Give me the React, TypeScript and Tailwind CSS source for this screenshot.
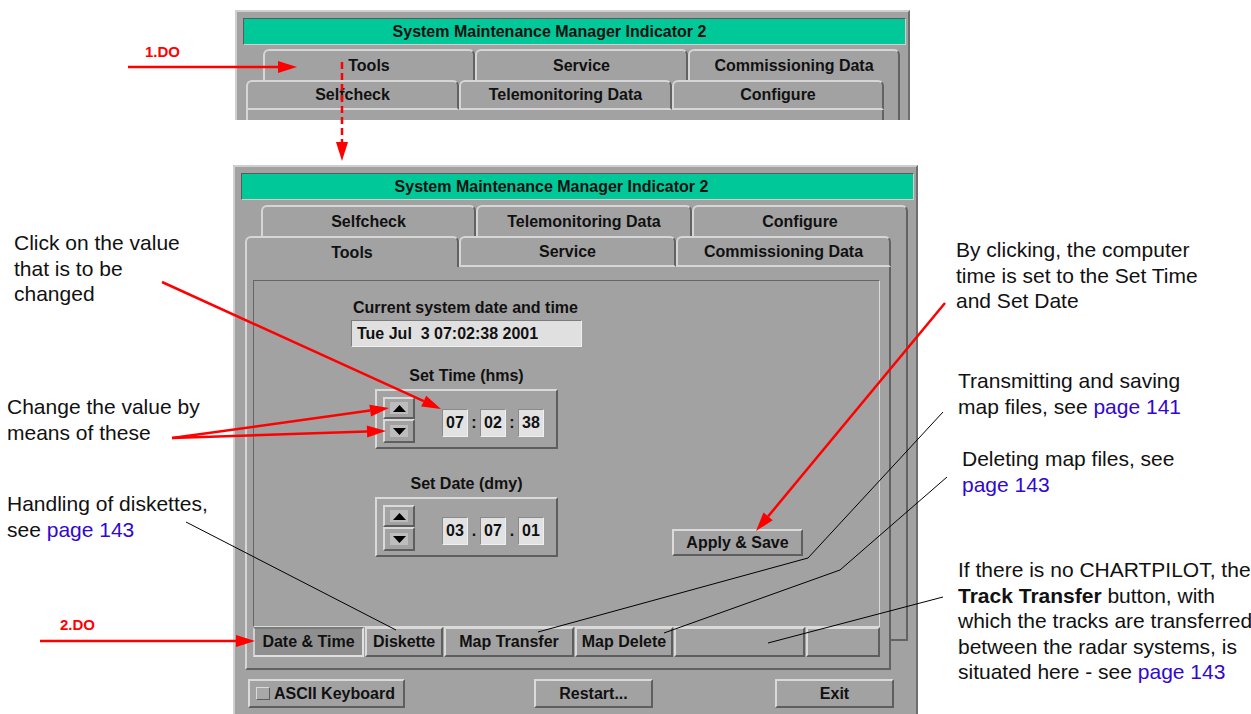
import React from 'react'

const LIGHT = 'border-t-[#dadada] border-l-[#dadada]'
const DARK = 'border-b-[#5e5e5e] border-r-[#5e5e5e]'
const raised = `border-2 ${LIGHT} ${DARK}`

function Tab({ label, className }: { label: string; className: string }) {
  return (
    <div
      className={`flex h-full items-center justify-center rounded-t-[6px] border-t-2 border-l-2 border-r-2 border-t-[#d6d6d6] border-l-[#d6d6d6] border-r-[#626262] text-[16px] font-bold ${className}`}
    >
      {label}
    </div>
  )
}

function Spin({ up }: { up?: boolean }) {
  return (
    <div
      className={`flex w-[32px] items-center justify-center ${raised} ${up ? 'h-[22px]' : 'h-[24px]'}`}
    >
      <div className="flex h-[12px] w-[18px] items-center justify-center bg-[#bdbdbd]">
        <svg width="13" height="7" viewBox="0 0 13 7">
          <polygon points={up ? '6.5,0 13,7 0,7' : '0,0 13,0 6.5,7'} fill="#000" />
        </svg>
      </div>
    </div>
  )
}

function Field({ value }: { value: string }) {
  return (
    <div className="flex h-[28px] w-[26px] items-center justify-center border border-t-[#8a8a8a] border-l-[#8a8a8a] border-r-[#efefef] border-b-[#efefef] bg-[#e2e2e2] text-[16px] font-bold">
      {value}
    </div>
  )
}

function Setter({ title, values, sep }: { title: string; values: string[]; sep: string }) {
  return (
    <div className="ml-[121px] w-[183px]">
      <div className="h-[20px] text-center text-[16px] leading-[20px] font-bold">{title}</div>
      <div className={`mt-[3px] flex h-[60px] ${raised}`}>
        <div className="ml-[6px] mt-[6px] flex flex-col">
          <Spin up />
          <Spin />
        </div>
        <div className="ml-[27px] mt-[18px] flex">
          <Field value={values[0]} />
          <div className="w-[12px] text-center text-[16px] leading-[28px] font-bold">{sep}</div>
          <Field value={values[1]} />
          <div className="w-[12px] text-center text-[16px] leading-[28px] font-bold">{sep}</div>
          <Field value={values[2]} />
        </div>
      </div>
    </div>
  )
}

function Button({ children, className }: { children: React.ReactNode; className: string }) {
  return (
    <div className={`flex items-center justify-center text-[16px] font-bold ${raised} ${className}`}>
      {children}
    </div>
  )
}

function Arrow({ x1, y1, x2, y2, dashed }: { x1: number; y1: number; x2: number; y2: number; dashed?: boolean }) {
  const a = Math.atan2(y2 - y1, x2 - x1)
  const L = 19
  const W = 6
  const bx = x2 - L * Math.cos(a)
  const by = y2 - L * Math.sin(a)
  const p1 = `${bx + W * Math.sin(a)},${by - W * Math.cos(a)}`
  const p2 = `${bx - W * Math.sin(a)},${by + W * Math.cos(a)}`
  return (
    <g>
      <line
        x1={x1}
        y1={y1}
        x2={bx}
        y2={by}
        stroke="#ff0000"
        strokeWidth={2.5}
        strokeDasharray={dashed ? '7 4' : undefined}
      />
      <polygon points={`${x2},${y2} ${p1} ${p2}`} fill="#ff0000" />
    </g>
  )
}

const link = 'text-[#3008d0]'

export default function App() {
  return (
    <div className="relative h-[714px] w-[1251px] overflow-hidden bg-white font-['Liberation_Sans',Arial,sans-serif] text-[#111]">
      {/* small window: step 1 */}
      <div className="absolute left-[235px] top-[10px] h-[110px] w-[675px] overflow-hidden border-2 border-b-0 border-t-[#cfcfcf] border-l-[#cfcfcf] border-r-[#6e6e6e] bg-[#a2a2a2] pl-[6px] pt-[6px]">
        <div className="flex h-[27px] w-[663px] items-center justify-center border border-[#5a5a5a] border-b-[#cfcfcf] border-r-[#cfcfcf] bg-[#00c898] pr-[50px] text-[16px] font-bold">
          System Maintenance Manager Indicator 2
        </div>
        <div className="ml-[20px] mt-[4px] flex h-[31px]">
          <Tab label="Tools" className="w-[212px]" />
          <Tab label="Service" className="w-[213px]" />
          <Tab label="Commissioning Data" className="w-[212px]" />
        </div>
        <div className="ml-[3px] flex">
          <div className="w-[638px]">
            <div className="flex h-[30px]">
              <Tab label="Selfcheck" className="w-[213px] border-b-2 border-b-[#d6d6d6]" />
              <Tab label="Telemonitoring Data" className="w-[213px] border-b-2 border-b-[#d6d6d6]" />
              <Tab label="Configure" className="w-[212px] border-b-2 border-b-[#d6d6d6]" />
            </div>
            <div className="h-[20px] border-l-2 border-r-2 border-l-[#d6d6d6] border-r-[#626262]" />
          </div>
          <div className="h-[50px] w-[16px] border-r-2 border-r-[#626262]" />
        </div>
      </div>

      {/* main window: step 2 */}
      <div className="absolute left-[233px] top-[165px] h-[560px] w-[685px] border-2 border-t-[#cfcfcf] border-l-[#cfcfcf] border-r-[#6e6e6e] border-b-[#6e6e6e] bg-[#a2a2a2] pl-[6px] pt-[6px]">
        <div className="flex h-[27px] w-[673px] items-center justify-center border border-[#5a5a5a] border-b-[#cfcfcf] border-r-[#cfcfcf] bg-[#00c898] pr-[52px] text-[16px] font-bold">
          System Maintenance Manager Indicator 2
        </div>
        <div className="ml-[20px] mt-[5px] flex h-[31px]">
          <Tab label="Selfcheck" className="w-[215px]" />
          <Tab label="Telemonitoring Data" className="w-[216px]" />
          <Tab label="Configure" className="w-[216px]" />
        </div>
        <div className="ml-[4px] flex">
          <div className="w-[646px]">
            <div className="flex h-[31px]">
              <Tab label="Tools" className="w-[214px]" />
              <Tab label="Service" className="w-[217px] border-b-2 border-b-[#d6d6d6]" />
              <Tab label="Commissioning Data" className="w-[215px] border-b-2 border-b-[#d6d6d6]" />
            </div>
            <div className="h-[403px] border-l-2 border-r-2 border-b-2 border-l-[#d6d6d6] border-r-[#626262] border-b-[#626262] pl-[6px] pt-[13px]">
              <div className="h-[347px] w-[627px] border border-t-[#666] border-l-[#666] border-r-[#dadada] border-b-[#dadada]">
                <div className="ml-[99px] mt-[17px] h-[20px] text-[16px] leading-[20px] font-bold">
                  Current system date and time
                </div>
                <div className="ml-[97px] mt-[2px] flex h-[27px] w-[231px] items-center whitespace-pre border border-t-[#7c7c7c] border-l-[#7c7c7c] border-r-[#efefef] border-b-[#efefef] bg-[#e0e0e0] pl-[5px] text-[16px] font-bold">
                  {'Tue Jul  3 07:02:38 2001'}
                </div>
                <div className="mt-[19px]">
                  <Setter title="Set Time (hms)" values={['07', '02', '38']} sep=":" />
                </div>
                <div className="mt-[25px] flex items-end">
                  <Setter title="Set Date (dmy)" values={['03', '07', '01']} sep="." />
                  <Button className="mb-[1px] ml-[114px] h-[27px] w-[131px]">Apply &amp; Save</Button>
                </div>
              </div>
              <div className="flex h-[30px] w-[627px] gap-[1px]">
                <div className="flex w-[111px] items-center justify-center border-2 border-t-[#7a7a7a] border-l-[#cfcfcf] border-r-[#e0e0e0] border-b-[#e0e0e0] bg-[#8f8f8f] text-[16px] font-bold">
                  Date &amp; Time
                </div>
                <Button className="w-[78px]">Diskette</Button>
                <Button className="w-[130px]">Map Transfer</Button>
                <Button className="w-[98px]">Map Delete</Button>
                <Button className="w-[131px]">{''}</Button>
                <Button className="w-[74px]">{''}</Button>
              </div>
            </div>
          </div>
          <div className="h-[405px] w-[17px] border-r-2 border-b-2 border-r-[#626262] border-b-[#626262]" />
        </div>
        <div className="mt-[9px] flex">
          <Button className="ml-[7px] h-[29px] w-[157px] !justify-start">
            <div className={`ml-[6px] h-[13px] w-[14px] border ${LIGHT} ${DARK} bg-[#a8a8a8]`} />
            <span className="ml-[4px]">ASCII Keyboard</span>
          </Button>
          <Button className="ml-[129px] h-[29px] w-[119px]">Restart...</Button>
          <Button className="ml-[122px] h-[29px] w-[119px]">Exit</Button>
        </div>
      </div>

      {/* step labels */}
      <div className="absolute left-[145px] top-[44px] text-[15px] leading-[16px] font-bold text-[#ff0000]">1.DO</div>
      <div className="absolute left-[60px] top-[617px] text-[15px] leading-[16px] font-bold text-[#ff0000]">2.DO</div>

      {/* callouts */}
      <div className="absolute left-[14px] top-[230px] whitespace-nowrap text-[21px] leading-[25.5px]">
        Click on the value
        <br />
        that is to be
        <br />
        changed
      </div>
      <div className="absolute left-[7px] top-[394px] whitespace-nowrap text-[21px] leading-[25.5px]">
        Change the value by
        <br />
        means of these
      </div>
      <div className="absolute left-[7px] top-[491px] whitespace-nowrap text-[21px] leading-[25.5px]">
        Handling of diskettes,
        <br />
        see <span className={link}>page 143</span>
      </div>
      <div className="absolute left-[956px] top-[237px] whitespace-nowrap text-[21px] leading-[25.5px]">
        By clicking, the computer
        <br />
        time is set to the Set Time
        <br />
        and Set Date
      </div>
      <div className="absolute left-[958px] top-[368px] whitespace-nowrap text-[21px] leading-[25.5px]">
        Transmitting and saving
        <br />
        map files, see <span className={link}>page 141</span>
      </div>
      <div className="absolute left-[962px] top-[446px] whitespace-nowrap text-[21px] leading-[25.5px]">
        Deleting map files, see
        <br />
        <span className={link}>page 143</span>
      </div>
      <div className="absolute left-[958px] top-[557px] whitespace-nowrap text-[21px] leading-[25.5px]">
        If there is no CHARTPILOT, the
        <br />
        <b>Track Transfer</b> button, with
        <br />
        which the tracks are transferred
        <br />
        between the radar systems, is
        <br />
        situated here - see <span className={link}>page 143</span>
      </div>

      {/* leader lines */}
      <svg className="pointer-events-none absolute left-0 top-0" width="1251" height="714">
        <g stroke="#000" strokeWidth={1} fill="none">
          <polyline points="186,522 396,630" />
          <polyline points="943,412 808,558 538,632" />
          <polyline points="947,477 840,570 664,633" />
          <polyline points="943,597 768,643" />
        </g>
        <Arrow x1={128} y1={67} x2={297} y2={67} />
        <Arrow x1={342} y1={62} x2={342} y2={161} dashed />
        <Arrow x1={40} y1={641} x2={255} y2={641} />
        <Arrow x1={162} y1={282} x2={441} y2={409} />
        <Arrow x1={172} y1={438} x2={389} y2={408} />
        <Arrow x1={172} y1={438} x2={386} y2={431} />
        <Arrow x1={945} y1={303} x2={756} y2={531} />
      </svg>
    </div>
  )
}
